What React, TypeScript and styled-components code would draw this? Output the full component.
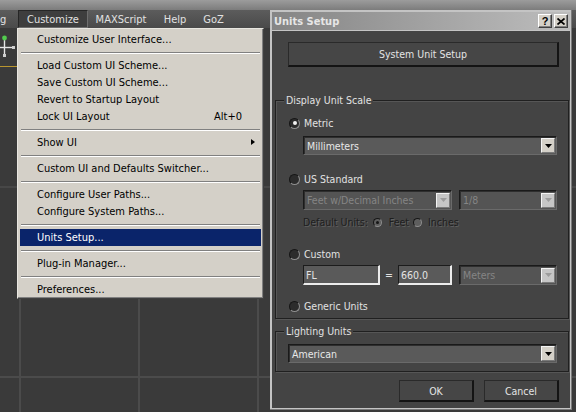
import React from 'react';
import styled, { createGlobalStyle, css } from 'styled-components';

const UI_FONT = `"DejaVu Sans Condensed", "Liberation Sans", sans-serif`;

const GlobalStyle = createGlobalStyle`
  html, body {
    margin: 0;
    padding: 0;
    background: #3a3a3a;
  }
  body {
    font-family: ${UI_FONT};
  }
`;

const Screen = styled.div`
  position: relative;
  width: 576px;
  height: 412px;
  overflow: hidden;
  display: flex;
  flex-direction: column;
  background: #3a3a3a;
  font-size: 11px;
`;

const TopStrip = styled.div`
  height: 10px;
  background: linear-gradient(#9c9c9c, #7c7c7c);
`;

const MenuBar = styled.div`
  height: 18px;
  display: flex;
  background: linear-gradient(#5c5c5c, #4a4a4a);
  color: #e2e2e2;
`;

const MenuTitle = styled.div<{ $w: number; $open?: boolean; $left?: boolean }>`
  width: ${p => p.$w}px;
  box-sizing: border-box;
  display: flex;
  align-items: center;
  justify-content: ${p => (p.$left ? 'flex-start' : 'center')};
  white-space: nowrap;
  ${p =>
    p.$open &&
    css`
      background: #3e3e3e;
      border: 1px solid;
      border-color: #262626 #6e6e6e #6e6e6e #262626;
    `}
`;

const Workspace = styled.div`
  flex: 1;
  display: flex;
  flex-direction: column;
`;

const ToolStrip = styled.div`
  width: 18px;
  height: 38px;
  border-bottom: 1px solid #b8952f;
  line-height: 0;
  padding-top: 4px;
  box-sizing: border-box;
  height: 39px;
`;

const Viewport = styled.div`
  flex: 1;
  background-color: #3a3a3a;
  background-image: linear-gradient(
      to right,
      transparent 19px,
      #4b4b4b 19px 21px,
      transparent 21px 138px,
      #4b4b4b 138px 140px,
      transparent 140px 257px,
      #4b4b4b 257px 259px,
      transparent 259px
    ),
    linear-gradient(
      to bottom,
      transparent 119px,
      #474747 119px 121px,
      transparent 121px 309px,
      #4b4b4b 309px 311px,
      transparent 311px
    );
`;

/* ---- Customize drop-down ---- */

const MenuPanel = styled.div`
  position: absolute;
  left: 17px;
  top: 28px;
  width: 247px;
  box-sizing: border-box;
  padding: 2px 2px 0 2px;
  background: #d4d0c8;
  border: 1px solid;
  border-color: #e8e6e0 #404040 #404040 #e8e6e0;
  box-shadow: inset -1px -1px 0 #808080;
  color: #000;
`;

const MenuRow = styled.div<{ $active?: boolean }>`
  height: 17px;
  display: flex;
  align-items: center;
  justify-content: space-between;
  padding: 0 19px 0 17px;
  white-space: nowrap;
  position: relative;
  ${p =>
    p.$active &&
    css`
      background: #0a246a;
      color: #fff;
    `}
`;

const MenuSep = styled.div`
  height: 2px;
  margin: 4px 1px 3px 1px;
  border-top: 1px solid #808080;
  border-bottom: 1px solid #fff;
  box-sizing: border-box;
`;

const SubArrow = styled.span`
  position: absolute;
  right: 6px;
  top: 5px;
  width: 0;
  height: 0;
  border-top: 3.5px solid transparent;
  border-bottom: 3.5px solid transparent;
  border-left: 4px solid #000;
`;

/* ---- Units Setup dialog ---- */

const Window = styled.div`
  position: absolute;
  left: 270px;
  top: 10px;
  width: 302px;
  height: 400px;
  box-sizing: border-box;
  padding: 2px;
  display: flex;
  flex-direction: column;
  gap: 1px;
  background: #c4c4c4;
  box-shadow: inset -1px -1px 0 #7a7a7a;
  font-size: 10.5px;
`;

const TitleBar = styled.div`
  height: 18px;
  flex: none;
  display: flex;
  align-items: center;
  justify-content: space-between;
  padding: 0 2px;
  background: linear-gradient(to right, #858585, #bdbdbd);
`;

const TitleText = styled.span`
  font-weight: bold;
  font-size: 11px;
  color: #e6e6e6;
`;

const CaptionButtons = styled.div`
  display: flex;
  gap: 2px;
`;

const CaptionButton = styled.div`
  width: 14px;
  height: 14px;
  box-sizing: border-box;
  display: flex;
  align-items: center;
  justify-content: center;
  background: #d4d0c8;
  border: 1px solid;
  border-color: #fff #404040 #404040 #fff;
  box-shadow: inset -1px -1px 0 #808080;
  font-family: "Liberation Sans", sans-serif;
  font-weight: bold;
  font-size: 11px;
  color: #000;
`;

const Body = styled.div`
  flex: 1;
  display: flex;
  flex-direction: column;
  padding: 11px 1px 0 3px;
  background: #444444;
  color: #e2e2e2;
`;

const PushButton = styled.div<{ $w?: number; $h: number }>`
  height: ${p => p.$h}px;
  ${p => (p.$w ? `width: ${p.$w}px;` : '')}
  box-sizing: border-box;
  display: flex;
  align-items: center;
  justify-content: center;
  background: #464646;
  border-style: solid;
  border-width: 1px 2px 2px 1px;
  border-color: #2a2a2a #141414 #141414 #2a2a2a;
  color: #e4e4e4;
`;

const WideButton = styled(PushButton)`
  margin: 0 10px 0 13px;
`;

const Group = styled.div<{ $top: number; $pad: string }>`
  position: relative;
  margin-top: ${p => p.$top}px;
  padding: ${p => p.$pad};
  display: flex;
  flex-direction: column;
  border: 1px solid #202020;
  box-shadow: 1px 1px 0 #565656, inset 1px 1px 0 #565656;
`;

const GroupLabel = styled.span`
  position: absolute;
  left: 8px;
  top: -7px;
  padding: 0 2px;
  line-height: 13px;
  background: #444444;
  color: #e2e2e2;
`;

const RadioRow = styled.div<{ $top?: number }>`
  height: 14px;
  margin-top: ${p => p.$top ?? 0}px;
  display: flex;
  align-items: center;
  gap: 4px;
`;

const RadioDot = styled.span<{ $size: number; $on?: boolean; $dim?: boolean }>`
  width: ${p => p.$size}px;
  height: ${p => p.$size}px;
  flex: none;
  box-sizing: border-box;
  border-radius: 50%;
  display: flex;
  align-items: center;
  justify-content: center;
  background: ${p => (p.$dim ? '#5e5e5e' : '#2c2c2c')};
  border: 1px solid;
  border-color: #161616 #8e8e8e #8e8e8e #161616;
  &::after {
    content: '';
    display: ${p => (p.$on ? 'block' : 'none')};
    width: ${p => (p.$dim ? 3 : 4)}px;
    height: ${p => (p.$dim ? 3 : 4)}px;
    border-radius: 50%;
    background: ${p => (p.$dim ? '#161616' : '#f2f2f2')};
  }
`;

const ControlRow = styled.div<{ $top: number; $h: number; $indent?: number }>`
  height: ${p => p.$h}px;
  margin-top: ${p => p.$top}px;
  margin-left: ${p => p.$indent ?? 0}px;
  display: flex;
  align-items: center;
  gap: 7px;
`;

const SelectBox = styled.div<{ $w?: number; $off?: boolean }>`
  height: 100%;
  ${p => (p.$w ? `width: ${p.$w}px; flex: none;` : 'flex: 1;')}
  box-sizing: border-box;
  display: flex;
  align-items: center;
  justify-content: space-between;
  padding: 0 1px 0 3px;
  background: ${p => (p.$off ? '#545454' : '#5a5a5a')};
  border: 1px solid;
  border-color: #1a1a1a #6a6a6a #6a6a6a #1a1a1a;
  box-shadow: inset 1px 1px 0 #2e2e2e;
  color: ${p => (p.$off ? '#858585' : '#e8e8e8')};
  white-space: nowrap;
  overflow: hidden;
`;

const ArrowBox = styled.span<{ $off?: boolean }>`
  width: 14px;
  height: 15px;
  flex: none;
  box-sizing: border-box;
  display: flex;
  align-items: center;
  justify-content: center;
  background: ${p => (p.$off ? '#c6c6c6' : '#d4d0c8')};
  border: 1px solid;
  border-color: #f4f4f4 #7a7a7a #7a7a7a #f4f4f4;
`;

const TextField = styled.div<{ $w: number }>`
  width: ${p => p.$w}px;
  height: 100%;
  flex: none;
  box-sizing: border-box;
  display: flex;
  align-items: center;
  padding-left: 2px;
  background: #5a5a5a;
  border-style: solid;
  border-width: 1px 2px 2px 1px;
  border-color: #1c1c1c #ececec #ececec #1c1c1c;
  color: #e4e4e4;
`;

const Equals = styled.span`
  width: 18px;
  text-align: center;
  color: #e2e2e2;
`;

const FieldGroup = styled.div`
  display: flex;
  align-items: center;
  height: 100%;
`;

const HintRow = styled.div<{ $top: number }>`
  height: 14px;
  margin-top: ${p => p.$top}px;
  margin-left: 14px;
  display: flex;
  align-items: center;
  color: #1e1e1e;
  text-shadow: 1px 1px 0 rgba(255, 255, 255, 0.16);
`;

const HintText = styled.span<{ $l?: number }>`
  margin-left: ${p => p.$l ?? 0}px;
`;

const HintRadio = styled.span<{ $l: number }>`
  margin-left: ${p => p.$l}px;
  display: flex;
`;

const ButtonRow = styled.div`
  margin-top: 8px;
  margin-right: 10px;
  display: flex;
  justify-content: flex-end;
  gap: 10px;
`;

/* ---- parts ---- */

const Gizmo = () => (
  <svg width="18" height="28" viewBox="0 0 18 28">
    <line x1="4.5" y1="8" x2="4.5" y2="23" stroke="#e6e6e6" strokeWidth="1.4" />
    <line x1="0" y1="15.5" x2="12" y2="15.5" stroke="#e6e6e6" strokeWidth="1.4" />
    <circle cx="4.5" cy="6" r="2.4" fill="#52cc4e" />
    <rect x="12" y="14" width="3" height="3" fill="#cfcfcf" />
    <rect x="3" y="22" width="3" height="3" fill="#cfcfcf" />
  </svg>
);

const DownTriangle: React.FC<{ off?: boolean }> = ({ off }) => (
  <svg width="7" height="4" viewBox="0 0 7 4">
    <polygon points="0,0 7,0 3.5,4" fill={off ? '#9c9c9c' : '#000'} />
  </svg>
);

const CloseGlyph = () => (
  <svg width="8" height="7" viewBox="0 0 8 7">
    <path d="M0.5 0.5 L7.5 6.5 M7.5 0.5 L0.5 6.5" stroke="#000" strokeWidth="1.7" />
  </svg>
);

interface ISelect {
  value: string;
  off?: boolean;
  w?: number;
}

const Select: React.FC<ISelect> = ({ value, off, w }) => (
  <SelectBox $off={off} $w={w}>
    <span>{value}</span>
    <ArrowBox $off={off}>
      <DownTriangle off={off} />
    </ArrowBox>
  </SelectBox>
);

interface IRadio {
  label: string;
  on?: boolean;
  top?: number;
}

const Radio: React.FC<IRadio> = ({ label, on, top }) => (
  <RadioRow $top={top}>
    <RadioDot $size={11} $on={on} />
    <span>{label}</span>
  </RadioRow>
);

type MenuEntry = { label: string; shortcut?: string; sub?: boolean; active?: boolean } | 'sep';

const menuEntries: MenuEntry[] = [
  { label: 'Customize User Interface...' },
  'sep',
  { label: 'Load Custom UI Scheme...' },
  { label: 'Save Custom UI Scheme...' },
  { label: 'Revert to Startup Layout' },
  { label: 'Lock UI Layout', shortcut: 'Alt+0' },
  'sep',
  { label: 'Show UI', sub: true },
  'sep',
  { label: 'Custom UI and Defaults Switcher...' },
  'sep',
  { label: 'Configure User Paths...' },
  { label: 'Configure System Paths...' },
  'sep',
  { label: 'Units Setup...', active: true },
  'sep',
  { label: 'Plug-in Manager...' },
  'sep',
  { label: 'Preferences...' }
];

const CustomizeMenu = () => (
  <MenuPanel>
    {menuEntries.map((entry, i) =>
      entry === 'sep' ? (
        <MenuSep key={i} />
      ) : (
        <MenuRow key={i} $active={entry.active}>
          <span>{entry.label}</span>
          {entry.shortcut && <span>{entry.shortcut}</span>}
          {entry.sub && <SubArrow />}
        </MenuRow>
      )
    )}
  </MenuPanel>
);

const UnitsSetup = () => (
  <Window>
    <TitleBar>
      <TitleText>Units Setup</TitleText>
      <CaptionButtons>
        <CaptionButton>?</CaptionButton>
        <CaptionButton>
          <CloseGlyph />
        </CaptionButton>
      </CaptionButtons>
    </TitleBar>
    <Body>
      <WideButton $h={25}>System Unit Setup</WideButton>

      <Group $top={33} $pad="15px 11px 5px 13px">
        <GroupLabel>Display Unit Scale</GroupLabel>
        <Radio label="Metric" on />
        <ControlRow $top={6} $h={19} $indent={14}>
          <Select value="Millimeters" />
        </ControlRow>

        <Radio label="US Standard" top={17} />
        <ControlRow $top={4} $h={20} $indent={14}>
          <Select value="Feet w/Decimal Inches" off w={149} />
          <Select value="1/8" off />
        </ControlRow>
        <HintRow $top={5}>
          <HintText>Default Units:</HintText>
          <HintRadio $l={5}>
            <RadioDot $size={9} $on $dim />
          </HintRadio>
          <HintText $l={7}>Feet</HintText>
          <HintRadio $l={4}>
            <RadioDot $size={9} $dim />
          </HintRadio>
          <HintText $l={6}>Inches</HintText>
        </HintRow>

        <Radio label="Custom" top={18} />
        <ControlRow $top={4} $h={20} $indent={14}>
          <FieldGroup>
            <TextField $w={77}>FL</TextField>
            <Equals>=</Equals>
            <TextField $w={54}>660.0</TextField>
          </FieldGroup>
          <Select value="Meters" off />
        </ControlRow>

        <Radio label="Generic Units" top={14} />
      </Group>

      <Group $top={12} $pad="12px 11px 8px 12px">
        <GroupLabel>Lighting Units</GroupLabel>
        <ControlRow $top={0} $h={19}>
          <Select value="American" />
        </ControlRow>
      </Group>

      <ButtonRow>
        <PushButton $w={75} $h={22}>
          OK
        </PushButton>
        <PushButton $w={75} $h={22}>
          Cancel
        </PushButton>
      </ButtonRow>
    </Body>
  </Window>
);

const App = () => (
  <Screen>
    <GlobalStyle />
    <TopStrip />
    <MenuBar>
      <MenuTitle $w={18} $left>
        g
      </MenuTitle>
      <MenuTitle $w={70} $open>
        Customize
      </MenuTitle>
      <MenuTitle $w={66}>MAXScript</MenuTitle>
      <MenuTitle $w={42}>Help</MenuTitle>
      <MenuTitle $w={35}>GoZ</MenuTitle>
    </MenuBar>
    <Workspace>
      <ToolStrip>
        <Gizmo />
      </ToolStrip>
      <Viewport />
    </Workspace>
    <CustomizeMenu />
    <UnitsSetup />
  </Screen>
);

export default App;
